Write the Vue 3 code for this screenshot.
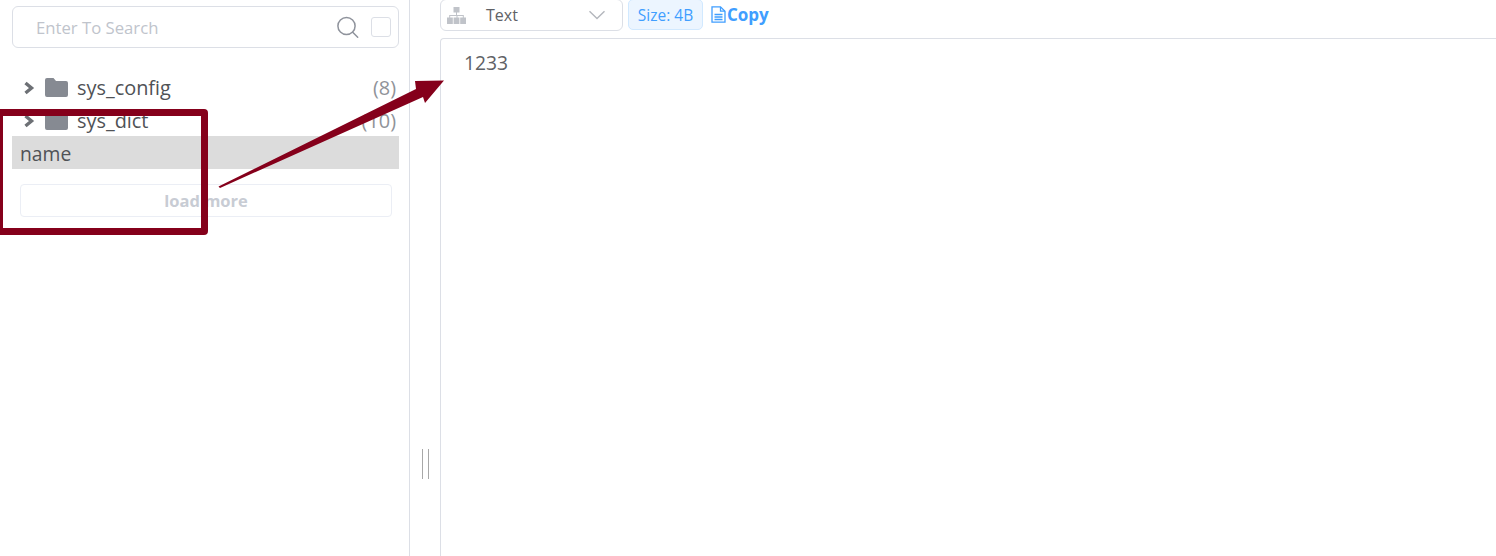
<script setup>
const folders = [
  { name: 'sys_config', count: 8 },
  { name: 'sys_dict', count: 10 },
];
</script>

<template>
  <div class="page">
    <aside class="aside">
      <div class="search">
        <span class="placeholder">Enter To Search</span>
        <svg class="search-icon" width="24" height="24" viewBox="0 0 24 24" fill="none" stroke="#8f939c" stroke-width="1.5">
          <circle cx="10.5" cy="11" r="8.6" />
          <path d="M16.7 17.2l5 5" stroke-linecap="round" />
        </svg>
        <span class="check"></span>
      </div>

      <div class="tree">
        <div v-for="f in folders" :key="f.name" class="row">
          <svg class="chevron" width="12" height="14" viewBox="0 0 12 14" fill="none" stroke="#6d7075" stroke-width="3.4">
            <path d="M2.5 2l6 5-6 5" />
          </svg>
          <svg class="folder" width="23" height="19" viewBox="0 0 23 19" fill="#868a92">
            <path d="M2 0h6.5l2.500 3h10a2 2 0 0 1 2 2v12a2 2 0 0 1-2 2H2a2 2 0 0 1-2-2V2a2 2 0 0 1 2-2z" />
          </svg>
          <span class="name">{{ f.name }}</span>
          <span class="count">({{ f.count }})</span>
        </div>
        <div class="key">name</div>
        <div class="more-wrap">
          <button class="more">load more</button>
        </div>
      </div>
    </aside>

    <div class="handle">
      <span class="grip"></span>
    </div>

    <main class="main">
      <div class="toolbar">
        <div class="select">
          <svg class="tree-icon" width="19" height="17" viewBox="0 0 19 17" fill="#c0c3c9">
            <rect x="6.5" y="0" width="6" height="5.500" />
            <rect x="0" y="10.500" width="5.800" height="6.500" />
            <rect x="6.600" y="10.500" width="5.800" height="6.500" />
            <rect x="13.200" y="10.500" width="5.800" height="6.500" />
            <path d="M9 5h1v3h6.800v3h-1V9h-5.300v2h-1V9H3.200v2h-1V8H9z" />
          </svg>
          <span class="select-text">Text</span>
          <svg class="arrow-down" width="18" height="10" viewBox="0 0 18 10" fill="none" stroke="#b4b7bd" stroke-width="1.4">
            <path d="M1.500 1.200L9 8.500l7.500-7.300" />
          </svg>
        </div>
        <span class="tag">Size: 4B</span>
        <span class="copy">
          <svg width="15" height="17" viewBox="0 0 15 17" fill="none" stroke="#409eff" stroke-width="1.3">
            <path d="M1 .8h8.500l4.500 4.400v11H1z" />
            <path d="M9.500 1v4.200H14M3.500 8.500h8M3.500 11h8M3.500 13.500h8" />
          </svg>
          Copy
        </span>
      </div>
      <div class="viewer">1233</div>
    </main>

    <!-- annotation drawn on top of the screenshot -->
    <div class="mark"></div>
    <svg class="mark-arrow" width="1496" height="556" viewBox="0 0 1496 556" fill="#85001b">
      <polygon points="218.500,186.500 416,89 415,81 444,80.500 425,103 423,97 220,188" />
    </svg>
  </div>
</template>

<style scoped>
.page {
  position: relative;
  display: flex;
  width: 1496px;
  height: 556px;
  overflow: hidden;
  background: #fff;
  font-family: "Open Sans", "Noto Sans", sans-serif;
  color: #606266;
}

.aside {
  box-sizing: border-box;
  width: 410px;
  flex: none;
  padding: 6px 10px 0 12px;
  border-right: 1px solid #dcdfe6;
}

.search {
  box-sizing: border-box;
  display: flex;
  align-items: center;
  height: 42px;
  padding: 0 7px 0 23px;
  border: 1px solid #dcdfe6;
  border-radius: 6px;
}

.placeholder {
  flex: 1;
  font-size: 16.7px;
  color: #c0c4cc;
}

.search-icon {
  margin-right: 11px;
}

.check {
  box-sizing: border-box;
  width: 20px;
  height: 20px;
  border: 1px solid #dcdfe6;
  border-radius: 3px;
}

.tree {
  margin-top: 23px;
}

.row {
  display: flex;
  align-items: center;
  height: 33px;
  padding-right: 3px;
  font-size: 19.9px;
  color: #505256;
}

.chevron {
  margin: 0 10px 0 11px;
}

.folder {
  margin-right: 9px;
}

.name {
  flex: 1;
}

.count {
  color: #909399;
}

.key {
  height: 33px;
  margin-top: -1px;
  padding-left: 8px;
  background: #dcdcdc;
  font-size: 19.3px;
  line-height: 35px;
  color: #505256;
}

.more-wrap {
  padding: 15px 7px 0 8px;
}

.more {
  box-sizing: border-box;
  display: block;
  width: 100%;
  height: 33px;
  padding: 0;
  border: 1px solid #ebeef5;
  border-radius: 4px;
  background: #fff;
  font-family: inherit;
  font-size: 16.5px;
  font-weight: 700;
  color: #c8ccd4;
}

.handle {
  display: flex;
  justify-content: center;
  align-items: flex-start;
  width: 30px;
  flex: none;
}

.grip {
  box-sizing: border-box;
  width: 7px;
  height: 30px;
  margin-top: 449px;
  border-left: 1px solid #a8a8a8;
  border-right: 1px solid #a8a8a8;
}

.main {
  flex: 1;
  min-width: 0;
  margin-top: -1px;
}

.toolbar {
  display: flex;
  align-items: flex-start;
  height: 39px;
}

.select {
  box-sizing: border-box;
  display: flex;
  align-items: center;
  width: 183px;
  height: 32px;
  padding: 0 16px 0 6px;
  border: 1px solid #dcdfe6;
  border-radius: 6px;
  font-size: 16px;
}

.select-text {
  flex: 1;
  margin-left: 20px;
}

.tag {
  box-sizing: border-box;
  width: 75px;
  height: 31px;
  margin-left: 5px;
  border: 1px solid #d1e9ff;
  border-radius: 5px;
  background: #ecf5ff;
  color: #409eff;
  font-size: 15.5px;
  line-height: 30px;
  text-align: center;
}

.copy {
  display: flex;
  align-items: center;
  gap: 1px;
  height: 31px;
  margin-left: 8px;
  color: #409eff;
  font-size: 17px;
  font-weight: 700;
}

.viewer {
  box-sizing: border-box;
  height: 530px;
  padding: 11px 0 0 23px;
  border-top: 1px solid #dcdfe6;
  border-left: 1px solid #dcdfe6;
  border-top-left-radius: 4px;
  font-size: 19.3px;
  line-height: 26px;
}

.mark {
  position: absolute;
  left: -4px;
  top: 109px;
  box-sizing: border-box;
  width: 212px;
  height: 126px;
  border: 7px solid #85001b;
  border-radius: 4px;
}

.mark-arrow {
  position: absolute;
  left: 0;
  top: 0;
}
</style>
